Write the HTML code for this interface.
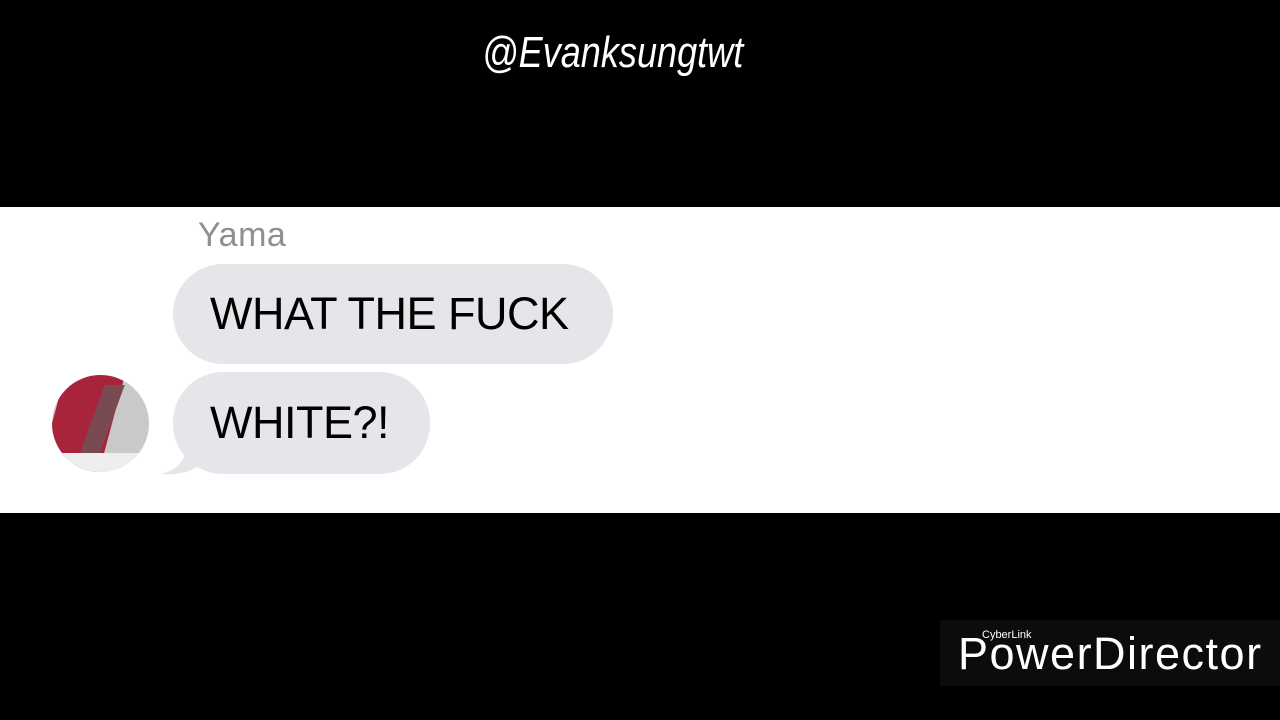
<!DOCTYPE html>
<html><head><style>
body{margin:0;width:1280px;height:720px;background:#000;position:relative;overflow:hidden;font-family:"Liberation Sans",sans-serif}
.t{position:absolute;top:28px;left:482px;color:#fff;font-size:44px;font-style:italic;font-family:"Liberation Sans Narrow","Liberation Sans",sans-serif;transform:scaleX(0.82);transform-origin:left;white-space:nowrap}
.band{position:absolute;left:0;top:207px;width:1280px;height:306px;background:#fff}
.b{position:absolute;background:#e5e5ea;color:#000;font-size:45px;letter-spacing:-0.5px;white-space:nowrap;box-sizing:border-box;padding-left:37px;border-radius:50px}
.pd{position:absolute;left:940px;top:620px;width:340px;height:66px;background:#0c0c0c}
</style></head><body>
<div class="t">@Evanksungtwt</div>
<div class="band">
<div style="position:absolute;left:198px;top:9px;font-size:34px;color:#8e8e93;letter-spacing:0.5px">Yama</div>
<div class="b" style="left:173px;top:57px;width:440px;height:100px;line-height:100px">WHAT THE FUCK</div>
<svg style="position:absolute;left:155px;top:225px" width="50" height="45"><path d="M30 0 L30 20 Q28 36 6 42 Q28 44 44 34 L44 0 Z" fill="#e5e5ea"/></svg>
<div class="b" style="left:173px;top:165px;width:257px;height:102px;line-height:102px">WHITE?!</div>
<div style="position:absolute;left:52px;top:168px;width:97px;height:97px;border-radius:50%;overflow:hidden;background:#c9c9c9">
<div style="position:absolute;left:0;top:0;width:60px;height:97px;background:#a8243a;transform:skewX(-15deg)"></div>
<div style="position:absolute;left:40px;top:10px;width:20px;height:70px;background:#7a4a52;transform:skewX(-20deg)"></div>
<div style="position:absolute;left:10px;top:78px;width:80px;height:20px;background:#eee"></div>
</div>
</div>
<div class="pd">
<div style="position:absolute;left:42px;top:9px;color:#fff;font-size:11px">CyberLink</div>
<div style="position:absolute;left:18px;top:8px;color:#fff;font-size:45px;letter-spacing:1.5px">PowerDirector</div>
</div>
</body></html>
